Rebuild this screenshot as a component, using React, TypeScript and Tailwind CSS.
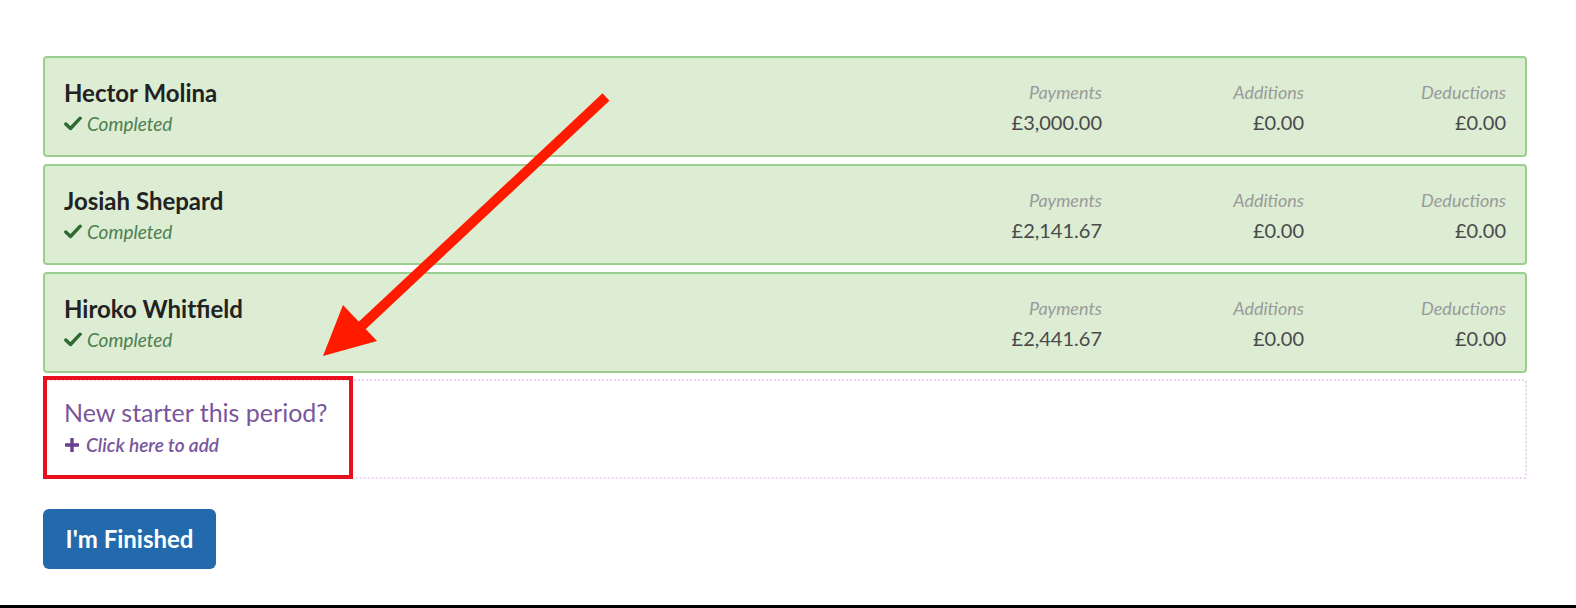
import React from "react";

const rows = [
  { name: "Hector Molina", payments: "£3,000.00", additions: "£0.00", deductions: "£0.00" },
  { name: "Josiah Shepard", payments: "£2,141.67", additions: "£0.00", deductions: "£0.00" },
  { name: "Hiroko Whitfield", payments: "£2,441.67", additions: "£0.00", deductions: "£0.00" },
];

function Check() {
  return (
    <svg width="18" height="15" viewBox="0 0 18 15" className="mr-[5px] shrink-0">
      <path d="M1.8 8 L6.5 12.5 L16.2 2.2" fill="none" stroke="#2f6a31" strokeWidth="3.4" strokeLinecap="round" strokeLinejoin="round" />
    </svg>
  );
}

function Col({ label, value }: { label: string; value: string }) {
  return (
    <div className="w-[202px] text-right flex flex-col">
      <span className="italic text-[18px] leading-[24px] text-[#9a9a9a]">{label}</span>
      <span className="mt-[3px] text-[20px] leading-[30px] text-[#4a4a4a]">{value}</span>
    </div>
  );
}

export default function App() {
  return (
    <div
      className="relative w-full h-[608px] bg-white border-b-[3px] border-black overflow-hidden"
      style={{ fontFamily: "Lato, 'Open Sans', sans-serif" }}
    >
      <div className="ml-[43px] w-[1484px] pt-[56px] flex flex-col">
        <div className="flex flex-col gap-[7px]">
          {rows.map((r) => (
            <div
              key={r.name}
              className="h-[101px] flex items-center justify-between rounded-[4px] border-2 border-[#9bcf8d] bg-[#dcedd4] pl-[19px] pr-[19px]"
            >
              <div className="flex flex-col pt-[4px]">
                <span className="font-bold text-[24px] leading-[30px] text-[#222]">{r.name}</span>
                <span className="flex items-center italic text-[19px] leading-[32px] text-[#4d7f50]">
                  <Check />
                  Completed
                </span>
              </div>
              <div className="flex pt-[3px]">
                <Col label="Payments" value={r.payments} />
                <Col label="Additions" value={r.additions} />
                <Col label="Deductions" value={r.deductions} />
              </div>
            </div>
          ))}
        </div>
        <div className="mt-[6px] h-[100px] rounded-[3px] border-2 border-dotted border-[#ecd3f2] flex flex-col justify-center pl-[19px]">
          <span className="text-[25px] leading-[30px] text-[#7a569c]">New starter this period?</span>
          <span className="mt-[2px] flex items-center italic font-semibold text-[19px] leading-[32px] text-[#7a569c]">
            <svg width="16" height="16" viewBox="0 0 16 16" className="mr-[6px]">
              <path d="M8 1 V15 M1 8 H15" stroke="#6b3f8f" strokeWidth="3.4" />
            </svg>
            Click here to add
          </span>
        </div>
        <div className="mt-[30px]">
          <button className="h-[60px] w-[173px] rounded-[6px] bg-[#236aad] text-white font-bold text-[24px]">
            I'm Finished
          </button>
        </div>
      </div>

      {/* annotation overlay */}
      <div className="absolute left-[43px] top-[376px] w-[310px] h-[103px] border-[4px] border-[#e8101c]" />
      <svg className="absolute left-0 top-0 pointer-events-none" width="1576" height="608">
        <line x1="606" y1="97" x2="352" y2="335" stroke="#ff1a00" strokeWidth="10" />
        <polygon points="323,356 343,305 377,341" fill="#ff1a00" />
      </svg>
    </div>
  );
}
